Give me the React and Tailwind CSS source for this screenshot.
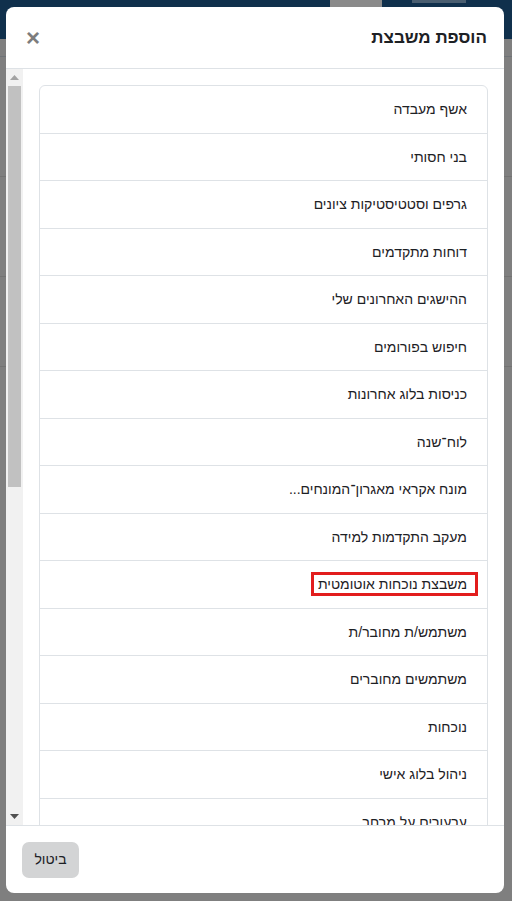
import React from "react";

const items = [
  "אשף מעבדה",
  "בני חסותי",
  "גרפים וסטטיסטיקות ציונים",
  "דוחות מתקדמים",
  "ההישגים האחרונים שלי",
  "חיפוש בפורומים",
  "כניסות בלוג אחרונות",
  "לוח־שנה",
  "מונח אקראי מאגרון־המונחים...",
  "מעקב התקדמות למידה",
  "משבצת נוכחות אוטומטית",
  "משתמש/ת מחובר/ת",
  "משתמשים מחוברים",
  "נוכחות",
  "ניהול בלוג אישי",
  "ערעורים על מרחב",
  "פעילויות",
  "קורסים",
];

export default function App() {
  return (
    <div
      className="relative h-[901px] w-[512px] overflow-hidden bg-[#7f7f7f]"
      style={{ fontFamily: '"Liberation Sans", Arial, sans-serif' }}
    >
      {/* dimmed page behind */}
      <div className="flex h-[39px] items-start justify-end bg-[#10304c] pr-[6px]">
        <div className="mr-[30px] h-[9px] w-[52px] bg-[#8a8a8a]" />
        <div className="mr-[40px] h-[3px] w-[54px] bg-[#4a5e70]" />
      </div>
      <div className="h-[18px] border-b border-[#6f7377]" />
      <div className="h-[120px] border-b border-[#737373]" />
      <div className="h-[100px] border-b border-[#737373]" />
      <div className="h-[90px] border-b border-[#737373]" />

      {/* modal */}
      <div
        dir="rtl"
        className="absolute left-[6px] top-[7px] flex h-[886px] w-[498px] flex-col overflow-hidden rounded-[8px] bg-white"
      >
        <div className="flex h-[62px] shrink-0 items-center justify-between border-b border-[#dee2e6] pl-[20px] pr-[17px]">
          <h5 className="text-[17px] font-bold text-[#1d2125]">הוספת משבצת</h5>
          <span className="text-[24px] font-bold leading-none text-[#7d7d7d]">×</span>
        </div>

        <div dir="ltr" className="flex min-h-0 flex-1">
          {/* scrollbar */}
          <div className="flex w-[17px] shrink-0 flex-col bg-[#f1f1f1]">
            <div className="flex h-[17px] items-center justify-center">
              <svg width="9" height="5" viewBox="0 0 9 5"><path d="M4.5 0L9 5H0z" fill="#a3a3a3" /></svg>
            </div>
            <div className="mx-[2px] h-[401px] bg-[#c1c1c1]" />
            <div className="flex-1" />
            <div className="flex h-[17px] items-center justify-center">
              <svg width="9" height="5" viewBox="0 0 9 5"><path d="M0 0H9L4.5 5z" fill="#505050" /></svg>
            </div>
          </div>
          <div dir="rtl" className="min-w-0 flex-1 overflow-hidden pl-[16px] pr-[16px] pt-[16px]">
            <div className="overflow-hidden rounded-[6px] border border-[#dee2e6]">
              {items.map((t, i) => (
                <div
                  key={i}
                  className={`flex items-center px-[20px] text-[14px] leading-[22px] text-[#1d2125] ${i > 0 ? "h-[47.5px] border-t border-[#dee2e6]" : "h-[46.5px]"}`}
                >
                  {i === 10 ? (
                    <span className="-mr-[11px] inline-block border-[3px] border-[#e21d1d] pl-[4px] pr-[8px] leading-[18px]">
                      {t}
                    </span>
                  ) : (
                    <span>{t}</span>
                  )}
                </div>
              ))}
            </div>
          </div>
        </div>

        <div className="flex h-[68px] shrink-0 items-center justify-end border-t border-[#dee2e6] pl-[16px] pr-[16px]">
          <button className="h-[36px] w-[57px] rounded-[7px] bg-[#d3d4d5] text-[14px] text-[#1d2125]">
            ביטול
          </button>
        </div>
      </div>
    </div>
  );
}
